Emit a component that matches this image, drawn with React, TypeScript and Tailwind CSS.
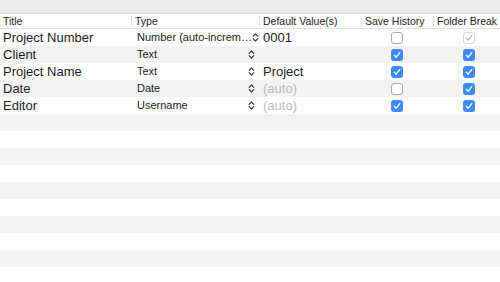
import React from "react";

type Row = {
  title: string;
  type: string;
  value: string;
  placeholder?: boolean;
  save: boolean;
  folder: boolean;
  folderDisabled?: boolean;
};

const rows: Row[] = [
  { title: "Project Number", type: "Number (auto-increm…", value: "0001", save: false, folder: true, folderDisabled: true },
  { title: "Client", type: "Text", value: "", save: true, folder: true },
  { title: "Project Name", type: "Text", value: "Project", save: true, folder: true },
  { title: "Date", type: "Date", value: "(auto)", placeholder: true, save: false, folder: true },
  { title: "Editor", type: "Username", value: "(auto)", placeholder: true, save: true, folder: true },
];

const cols = "grid grid-cols-[131px_128px_102px_72px_72px]";

function Stepper() {
  return (
    <svg width="7" height="11" viewBox="0 0 7 11" className="shrink-0">
      <path d="M1.2 4.3 L3.5 2 L5.8 4.3" fill="none" stroke="#3a3a3a" strokeWidth="1.2" strokeLinecap="round" strokeLinejoin="round" />
      <path d="M1.2 6.7 L3.5 9 L5.8 6.7" fill="none" stroke="#3a3a3a" strokeWidth="1.2" strokeLinecap="round" strokeLinejoin="round" />
    </svg>
  );
}

function Checkbox({ checked, disabled }: { checked: boolean; disabled?: boolean }) {
  if (checked && !disabled) {
    return (
      <div className="w-[12px] h-[12px] rounded-[3px] bg-[#3d8af7] flex items-center justify-center">
        <svg width="8" height="8" viewBox="0 0 8 8">
          <path d="M1.3 4.3 L3.2 6.2 L6.8 1.6" fill="none" stroke="#fff" strokeWidth="1.3" strokeLinecap="round" strokeLinejoin="round" />
        </svg>
      </div>
    );
  }
  return (
    <div
      className={
        disabled
          ? "w-[12px] h-[12px] rounded-[3px] border border-[#d6d6d6] bg-white flex items-center justify-center"
          : "w-[12px] h-[12px] rounded-[3px] border border-[#a9a9a9] bg-white"
      }
    >
      {disabled && checked && (
        <svg width="8" height="8" viewBox="0 0 8 8">
          <path d="M1.3 4.3 L3.2 6.2 L6.8 1.6" fill="none" stroke="#b4b4b4" strokeWidth="1.1" strokeLinecap="round" strokeLinejoin="round" />
        </svg>
      )}
    </div>
  );
}

function HeaderCell({ label, first }: { label: string; first?: boolean }) {
  return (
    <div className="flex items-center h-full whitespace-nowrap">
      {!first && <span className="w-px h-[10px] bg-[#dcdcdc]" />}
      <span className="pl-[3px]">{label}</span>
    </div>
  );
}

export default function App() {
  const filler = Array.from({ length: 10 }, (_, i) => i + rows.length);

  return (
    <div
      className="w-[500px] h-[282px] overflow-hidden bg-white text-[#1e1e1e]"
      style={{ fontFamily: '"Liberation Sans", Arial, sans-serif' }}
    >
      <div className="h-[14px] bg-[#ececec] border-b border-[#d8d8d8]" />

      <div className={`${cols} h-[15px] text-[10.5px] leading-none text-[#262626] border-b border-[#e2e2e2]`}>
        <HeaderCell label="Title" first />
        <HeaderCell label="Type" />
        <HeaderCell label="Default Value(s)" />
        <HeaderCell label="Save History" />
        <HeaderCell label="Folder Break" />
      </div>

      {rows.map((r, i) => (
        <div key={r.title} className={`${cols} h-[17px] items-center ${i % 2 === 1 ? "bg-[#f3f3f3]" : "bg-white"}`}>
          <div className="pl-[3px] text-[13px] leading-none text-[#1b1b1b] whitespace-nowrap">{r.title}</div>
          <div className="flex items-center justify-between pl-[6px] pr-[4px] text-[11px] leading-none text-[#222]">
            <span className="whitespace-nowrap">{r.type}</span>
            <Stepper />
          </div>
          <div className={`pl-[4px] text-[13px] leading-none whitespace-nowrap ${r.placeholder ? "text-[#b9b9b9]" : "text-[#1b1b1b]"}`}>
            {r.value}
          </div>
          <div className="flex justify-center">
            <Checkbox checked={r.save} />
          </div>
          <div className="flex justify-center">
            <Checkbox checked={r.folder} disabled={r.folderDisabled} />
          </div>
        </div>
      ))}

      {filler.map((n) => (
        <div key={n} className={`h-[17px] ${n % 2 === 1 ? "bg-[#f3f3f3]" : "bg-white"}`} />
      ))}
    </div>
  );
}
